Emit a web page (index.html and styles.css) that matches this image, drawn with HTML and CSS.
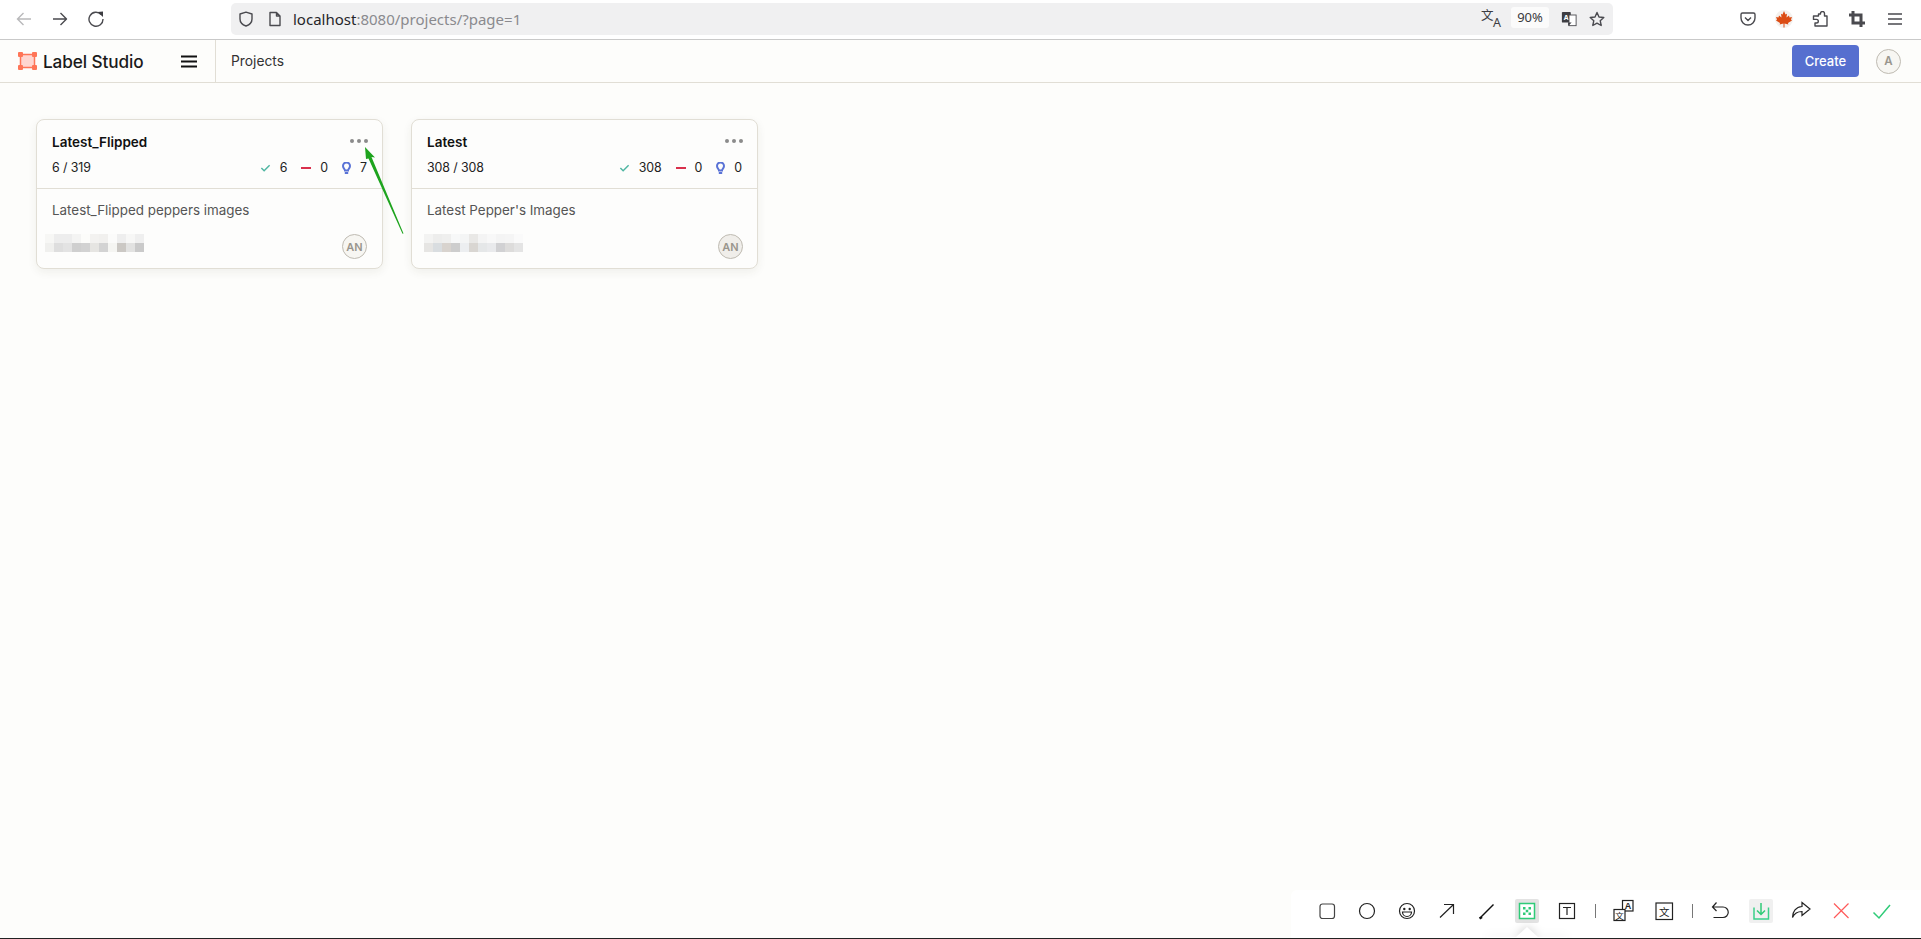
FILE: index.html
```html
<!DOCTYPE html>
<html lang="en">
<head>
<meta charset="utf-8">
<title>Label Studio</title>
<link rel="stylesheet" href="styles.css">
</head>
<body>
<header class="browser">
  <nav class="nav">
    <svg class="nav-ico" viewBox="0 0 16 16"><path class="st-dim" d="M15 8H1.500M7.500 2 1.500 8l6 6"/></svg>
    <svg class="nav-ico" viewBox="0 0 16 16"><path class="st-dark" d="M1 8h13.500M8.500 2l6 6-6 6"/></svg>
    <svg class="nav-ico" viewBox="0 0 16 16"><path class="st-dark" d="M13.200 3.500A7 7 0 1 0 15 8"/><path class="fl-dark" d="M9.500 1l5.500-.5V6z"/></svg>
  </nav>
  <div class="urlbar">
    <svg class="url-ico" viewBox="0 0 16 16"><path class="st-dark" d="M8 1.200 14 3v5c0 3.500-3 6-6 7-3-1-6-3.500-6-7V3z"/></svg>
    <svg class="url-ico" viewBox="0 0 16 16"><path class="st-dark" d="M3 1.500h6.500L13 5v9.500H3zM9.500 1.500V5H13"/></svg>
    <span class="url"><span class="url-host">localhost</span>:8080/projects/?page=1</span>
    <span class="url-end">
      <span class="tr-ico"><span class="tr-zh">文</span><span class="tr-en">A</span></span>
      <span class="zoom-pill">90%</span>
      <svg class="url-ico" viewBox="0 0 18 18"><rect class="fl-dark" x="1" y="1" width="10" height="12" rx="1"/><text class="tr-a" x="3" y="10">A</text><rect class="st-thin" x="9" y="4.500" width="8" height="12"/><path class="fl-dark" d="M8 13v4l4-4z"/></svg>
      <svg class="url-ico" viewBox="0 0 16 16"><path class="st-dark" d="m8 1.500 2 4.500 4.800.500-3.600 3.200 1 4.800L8 12.100 3.800 14.500l1-4.800-3.600-3.200L6 6z"/></svg>
    </span>
  </div>
  <div class="tools">
    <svg class="tool-ico" viewBox="0 0 16 16"><path class="st-dark" d="M2.500 2h11A1.500 1.500 0 0 1 15 3.500V7a7 7 0 0 1-14 0V3.500A1.500 1.500 0 0 1 2.500 2zM5 6.500 8 9.500l3-3"/></svg>
    <svg class="tool-ico tool-maple" viewBox="0 0 18 18"><circle class="fl-pale" cx="9" cy="9" r="9"/><path class="fl-maple" d="M9 1 10.500 4.500 12 3.700 11.500 7.500 14 5.500l.500 2 2.500-.500-1 2.500 1 1-4 2.500.3 1.500L9.500 13.500V17.500h-1v-4L4.700 14.500l.3-1.500L1 10.500l1-1L1 7l2.500.5L4 5.500l2.500 2L6 3.700 7.500 4.500z"/></svg>
    <svg class="tool-ico" viewBox="0 0 16 16"><path class="st-dark" d="M6.500 3h2V2.500a2 2 0 0 1 4 0V5H15v10H3v-3h1.500a1.800 1.800 0 0 0 0-3.600H1.500V5h5z"/></svg>
    <svg class="tool-ico" viewBox="0 0 16 16"><path class="st-crop" d="M4 0v12h12M0 4h12v12"/></svg>
    <svg class="tool-ico tool-menu" viewBox="0 0 16 16"><path class="st-dark" d="M1 3h14M1 8h14M1 13h14"/></svg>
  </div>
</header>

<div class="appbar">
  <div class="brand">
    <svg class="logo" viewBox="0 0 19 18"><rect class="logo-fill" x="2" y="2" width="15" height="14"/><path class="logo-line" d="M2.500 2.500h14v13h-14z"/><rect class="logo-dot" x="0" y="0" width="5" height="5" rx="1"/><rect class="logo-dot" x="14" y="0" width="5" height="5" rx="1"/><rect class="logo-dot" x="0" y="13" width="5" height="5" rx="1"/><rect class="logo-dot" x="14" y="13" width="5" height="5" rx="1"/></svg>
    <span class="brand-name">Label Studio</span>
    <svg class="burger" viewBox="0 0 16 13"><path class="st-burger" d="M0 1.500h16M0 6.500h16M0 11.500h16"/></svg>
  </div>
  <div class="crumb">Projects</div>
  <button class="create">Create</button>
  <span class="avatar avatar-top">A</span>
</div>

<main class="main">
  <article class="card">
    <div class="card-head">
      <div class="title-row"><h2 class="title">Latest_Flipped</h2><span class="dots"><i></i><i></i><i></i></span></div>
      <div class="stat-row">
        <span>6 / 319</span>
        <span class="stats">
          <span class="stat"><svg class="ic-check" viewBox="0 0 12 10"><path d="M1.500 5l3 3 6-6"/></svg>6</span>
          <span class="stat"><svg class="ic-dash" viewBox="0 0 10 10"><path d="M0 5h10"/></svg>0</span>
          <span class="stat"><svg class="ic-bulb" viewBox="0 0 9 12"><path d="M3 8.500C3 7 1 6.500 1 4a3.500 3.500 0 0 1 7 0C8 6.500 6 7 6 8.500zM2.800 11h3.400"/></svg>7</span>
        </span>
      </div>
    </div>
    <div class="card-body">
      <p class="desc">Latest_Flipped peppers images</p>
      <div class="meta-row">
        <svg class="pix" viewBox="0 0 99 18"><rect x="0" y="0" width="9" height="9" fill="#f7f7f5"/><rect x="9" y="0" width="9" height="9" fill="#ededed"/><rect x="18" y="0" width="9" height="9" fill="#ededed"/><rect x="27" y="0" width="9" height="9" fill="#f4f4f3"/><rect x="36" y="0" width="9" height="9" fill="#fcfcfa"/><rect x="45" y="0" width="9" height="9" fill="#f3f2f0"/><rect x="54" y="0" width="9" height="9" fill="#f1f0ee"/><rect x="63" y="0" width="9" height="9" fill="#fbfbfa"/><rect x="72" y="0" width="9" height="9" fill="#eeeeee"/><rect x="81" y="0" width="9" height="9" fill="#f7f7f6"/><rect x="90" y="0" width="9" height="9" fill="#efefef"/><rect x="0" y="9" width="9" height="9" fill="#f0f0ee"/><rect x="9" y="9" width="9" height="9" fill="#dedede"/><rect x="18" y="9" width="9" height="9" fill="#e3e3e3"/><rect x="27" y="9" width="9" height="9" fill="#cfcfcf"/><rect x="36" y="9" width="9" height="9" fill="#d2d2d2"/><rect x="45" y="9" width="9" height="9" fill="#e6e5e2"/><rect x="54" y="9" width="9" height="9" fill="#d3d3d3"/><rect x="63" y="9" width="9" height="9" fill="#f5f5f2"/><rect x="72" y="9" width="9" height="9" fill="#cbc8c4"/><rect x="81" y="9" width="9" height="9" fill="#e2e2e1"/><rect x="90" y="9" width="9" height="9" fill="#cacaca"/></svg>
        <span class="avatar avatar-card">AN</span>
      </div>
    </div>
  </article>

  <article class="card">
    <div class="card-head">
      <div class="title-row"><h2 class="title">Latest</h2><span class="dots"><i></i><i></i><i></i></span></div>
      <div class="stat-row">
        <span>308 / 308</span>
        <span class="stats">
          <span class="stat"><svg class="ic-check" viewBox="0 0 12 10"><path d="M1.500 5l3 3 6-6"/></svg>308</span>
          <span class="stat"><svg class="ic-dash" viewBox="0 0 10 10"><path d="M0 5h10"/></svg>0</span>
          <span class="stat"><svg class="ic-bulb" viewBox="0 0 9 12"><path d="M3 8.500C3 7 1 6.500 1 4a3.500 3.500 0 0 1 7 0C8 6.500 6 7 6 8.500zM2.800 11h3.400"/></svg>0</span>
        </span>
      </div>
    </div>
    <div class="card-body">
      <p class="desc">Latest Pepper's Images</p>
      <div class="meta-row meta-alt">
        <svg class="pix" viewBox="0 0 99 18"><rect x="0" y="0" width="9" height="9" fill="#f3f3f2"/><rect x="9" y="0" width="9" height="9" fill="#ededec"/><rect x="18" y="0" width="9" height="9" fill="#efefee"/><rect x="27" y="0" width="9" height="9" fill="#f7f8f8"/><rect x="36" y="0" width="9" height="9" fill="#f4f5f5"/><rect x="45" y="0" width="9" height="9" fill="#e9e8e6"/><rect x="54" y="0" width="9" height="9" fill="#f4f4f4"/><rect x="63" y="0" width="9" height="9" fill="#f8f8f8"/><rect x="72" y="0" width="9" height="9" fill="#f4f4f4"/><rect x="81" y="0" width="9" height="9" fill="#f5f5f5"/><rect x="90" y="0" width="9" height="9" fill="#fafafa"/><rect x="0" y="9" width="9" height="9" fill="#e6e5e3"/><rect x="9" y="9" width="9" height="9" fill="#d9dde0"/><rect x="18" y="9" width="9" height="9" fill="#d8d3ce"/><rect x="27" y="9" width="9" height="9" fill="#cdcdcd"/><rect x="36" y="9" width="9" height="9" fill="#eceef0"/><rect x="45" y="9" width="9" height="9" fill="#d9d6d2"/><rect x="54" y="9" width="9" height="9" fill="#e5e7e8"/><rect x="63" y="9" width="9" height="9" fill="#e9eaec"/><rect x="72" y="9" width="9" height="9" fill="#d1d1d3"/><rect x="81" y="9" width="9" height="9" fill="#dddcdb"/><rect x="90" y="9" width="9" height="9" fill="#e4e4e4"/></svg>
        <span class="avatar avatar-card avatar-alt">AN</span>
      </div>
    </div>
  </article>
</main>
<div class="edge"></div>

<svg class="annot" viewBox="0 0 60 100"><path class="annot-arrow" d="M5 3 15 13.500 11.500 13 43.500 89.500 42.500 89.800 8.500 14.500 6 15z"/></svg>

<div class="shot-bar">
  <span class="sb"><svg viewBox="0 0 24 24"><rect class="sb-round" x="5" y="5" width="14.500" height="14.500" rx="2.500"/></svg></span>
  <span class="sb"><svg viewBox="0 0 24 24"><circle class="sb-line" cx="12" cy="12" r="7.500"/></svg></span>
  <span class="sb"><svg viewBox="0 0 24 24"><circle class="sb-line" cx="12" cy="12" r="7.500"/><circle class="sb-fill" cx="9.300" cy="10" r="1.200"/><circle class="sb-fill" cx="14.700" cy="10" r="1.200"/><path class="sb-line" d="M7.500 13h9a4.500 4.500 0 0 1-9 0z"/></svg></span>
  <span class="sb"><svg viewBox="0 0 24 24"><path class="sb-line" d="M5 18.500 18.500 5.500M9 5.500h9.500V15"/></svg></span>
  <span class="sb"><svg viewBox="0 0 24 24"><path class="sb-pen" d="M6 18 18.500 5.500"/><path class="sb-pen-tip" d="M4.500 19.500 7 18"/></svg></span>
  <span class="sb sb-on"><svg viewBox="0 0 24 24"><rect class="sb-green" x="4.500" y="4.500" width="15" height="15"/><rect class="sb-gfill" x="8" y="8" width="2.500" height="2.500"/><rect class="sb-gfill" x="13.500" y="8" width="2.500" height="2.500"/><rect class="sb-gfill" x="10.750" y="10.750" width="2.500" height="2.500"/><rect class="sb-gfill" x="8" y="13.500" width="2.500" height="2.500"/><rect class="sb-gfill" x="13.500" y="13.500" width="2.500" height="2.500"/></svg></span>
  <span class="sb"><svg viewBox="0 0 24 24"><rect class="sb-line" x="4.500" y="4.500" width="15" height="15"/><path class="sb-line" d="M8 8.500h8M12 8.500V16"/></svg></span>
  <span class="sb-sep"></span>
  <span class="sb"><svg viewBox="0 0 24 24"><rect class="sb-box" x="10.500" y="1.500" width="10.500" height="10.500"/><text class="sb-txt" x="12.800" y="10">A</text><rect class="sb-boxw" x="2" y="10.500" width="11" height="11"/><text class="sb-txt-zh" x="3.300" y="19.500">文</text></svg></span>
  <span class="sb"><svg viewBox="0 0 24 24"><rect class="sb-line" x="4" y="4" width="16.500" height="16.500"/><text class="sb-txt-zh2" x="7" y="17">文</text></svg></span>
  <span class="sb-sep"></span>
  <span class="sb"><svg viewBox="0 0 24 24"><path class="sb-line" d="M7.500 3.500 3.500 8l4 4M3.500 8H14a4.500 4.500 0 0 1 0 10.500H4.500"/></svg></span>
  <span class="sb sb-soft"><svg viewBox="0 0 24 24"><path class="sb-green2" d="M5 8.500V20h14.500V8.500"/><path class="sb-green3" d="M12 4v11M8 11.500l4 4 4-4"/></svg></span>
  <span class="sb"><svg viewBox="0 0 24 24"><path class="sb-line" d="M13 3.500 21 10l-8 6.500V12.500c-4 0-7.500 1.500-9.500 6 0-6 3.500-10.500 9.500-11z"/></svg></span>
  <span class="sb"><svg viewBox="0 0 24 24"><path class="sb-x" d="M5 4.500 19.500 19M19.500 4.500 5 19"/></svg></span>
  <span class="sb"><svg viewBox="0 0 24 24"><path class="sb-ok" d="M4.500 13.500 10 19 21 6"/></svg></span>
</div>
<div class="shot-tip"></div>
</body>
</html>
```
FILE: styles.css
```css
* { box-sizing: border-box; }
html, body { margin: 0; height: 100%; }
body {
  width: 1921px; height: 939px; overflow: hidden; position: relative;
  display: flex; flex-direction: column;
  background: #fdfdfb; color: #1f1f1f;
  font-family: "Inter", "Liberation Sans", sans-serif;
}
svg { display: block; fill: none; }

/* browser chrome */
.browser {
  height: 40px; background: #fff; border-bottom: 1px solid #c9c9c9;
  display: flex; align-items: flex-start; padding-top: 3px;
}
.nav { width: 231px; padding: 8px 0 0 16px; display: flex; gap: 20px; }
.nav-ico { width: 16px; height: 16px; }
.st-dim { stroke: #b9b9bb; stroke-width: 1.4; }
.st-dark { stroke: #4a4a4f; stroke-width: 1.4; stroke-linejoin: round; }
.st-thin { stroke: #4a4a4f; stroke-width: 1; fill: #fff; }
.st-crop { stroke: #4a4a4f; stroke-width: 3; }
.fl-dark { fill: #3d3d42; }
.fl-pale { fill: #f4f1ee; }
.fl-maple { fill: #dc4c14; }
.urlbar {
  width: 1382px; height: 32px; background: #f0f0f1; border-radius: 5px;
  display: flex; align-items: center; padding-left: 7px; gap: 13px;
  font-family: "Noto Sans", sans-serif;
}
.url-ico { width: 16px; height: 16px; flex: none; }
.tr-ico { display: grid; width: 20px; height: 20px; flex: none; margin: 0 -2px; color: #3d3d42; }
.tr-zh { grid-area: 1 / 1; justify-self: start; align-self: start; font: 12.500px/12px "Noto Sans CJK SC", sans-serif; }
.tr-en { grid-area: 1 / 1; justify-self: end; align-self: end; font: 12.500px/12px "Noto Sans", sans-serif; }
.url { font-size: 15px; color: #8a8a8e; margin-left: -3px; }
.url-host { color: #26262a; }
.url-end { margin-left: auto; display: flex; align-items: center; gap: 12px; padding-right: 8px; }
.zoom-pill {
  width: 38px; height: 21px; margin-top: -3px; border-radius: 3px; background: #fbfbfb;
  font-size: 13px; color: #3a3a3e; text-align: center; line-height: 21px;
}
.tr-a { font: bold 8px "Noto Sans", sans-serif; fill: #fff; }
.sb-txt { font: bold 9px "Liberation Sans", sans-serif; fill: #222; }
.sb-txt-zh { font: 8.500px "Noto Sans CJK SC", sans-serif; fill: #222; }
.sb-txt-zh2 { font: 10.500px "Noto Sans CJK SC", sans-serif; fill: #222; }
.tools { flex: 1; display: flex; padding: 8px 17px 0 127px; gap: 21px; }
.tool-ico { width: 16px; height: 16px; flex: none; }
.tool-maple { width: 18px; height: 18px; margin: -1px -2px 0 -2px; }
.tool-menu { margin-left: 1px; }

/* app header */
.appbar {
  height: 43px; border-bottom: 1px solid #e1ded5; display: flex; align-items: center;
  padding-right: 20px;
}
.brand {
  width: 216px; height: 100%; border-right: 1px solid #e1ded5;
  display: flex; align-items: center; padding-left: 18px;
}
.logo { width: 19px; height: 18px; flex: none; }
.logo-fill { fill: #ffd6d0; }
.logo-line { stroke: #ff7557; stroke-width: 1.500; }
.logo-dot { fill: #ff7557; }
.brand-name { font-size: 17.200px; font-weight: 500; margin-left: 6px; color: #1a1a1a; white-space: nowrap; width: 101px; letter-spacing: -0.1px; }
.burger { width: 16px; height: 13px; margin-left: 37px; }
.st-burger { stroke: #111; stroke-width: 2.200; }
.crumb { margin-left: 15px; font-size: 13.800px; color: #333; flex: 1; }
.create {
  width: 67px; height: 32px; border: 0; border-radius: 4px; background: #566fcf;
  color: #fff; font: 500 13px "Inter", sans-serif; padding: 0;
}
.avatar {
  border-radius: 50%; display: flex; align-items: center; justify-content: center; flex: none;
  width: 25px; height: 25px; border: 1.300px solid #bfbbb2; color: #99958d; background: #f7f6f2;
  font-weight: 600;
}
.avatar-top { font-size: 11.500px; margin-left: 17px; }
.avatar-card { font-size: 11px; }
.avatar-alt { background: #f0eeea; }

/* cards */
.main { flex: 1; display: flex; align-items: flex-start; gap: 28px; padding: 36px 0 0 36px; }
.card {
  width: 347px; height: 150px; background: #fdfdfc; border: 1px solid #e1ded5; border-radius: 8px;
  box-shadow: 0 3px 10px rgba(60, 50, 30, .07);
}
.card-head { height: 69px; border-bottom: 1px solid #e1ded5; padding: 13px 15px 0 15px; }
.title-row { display: flex; justify-content: space-between; align-items: center; height: 17px; }
.title { margin: 0; font-size: 13.500px; font-weight: 600; color: #111; }
.dots { display: flex; gap: 3px; margin-right: -1px; margin-top: -1px; }
.dots i { width: 4px; height: 4px; border-radius: 50%; background: #8b8b8b; }
.stat-row {
  display: flex; justify-content: space-between; margin-top: 10px;
  font-size: 12.400px; line-height: 16px; color: #222; letter-spacing: -0.1px;
}
.stats { display: flex; gap: 14px; }
.stat { display: flex; align-items: center; gap: 9px; }
.ic-check { width: 11px; height: 10px; }
.ic-check path { stroke: #4fb6a2; stroke-width: 1.600; }
.ic-dash { width: 10px; height: 10px; }
.ic-dash path { stroke: #d9304c; stroke-width: 2; }
.ic-bulb { width: 9px; height: 12px; }
.ic-bulb path { stroke: #5a73d6; stroke-width: 2; }
.card-body { padding: 13px 15px 0 15px; }
.desc { margin: 0; font-size: 13.400px; line-height: 17px; color: #555; }
.meta-row { display: flex; justify-content: space-between; align-items: flex-start; margin-top: 15px; margin-left: -7px; }
.meta-alt { margin-left: -3px; margin-right: -1px; }
.pix { width: 99px; height: 18px; filter: blur(.5px); }

/* bottom strip of the screenshot */
.edge { height: 1px; background: #222; flex: none; }

/* annotation overlay */
.annot { position: absolute; left: 360px; top: 144px; width: 60px; height: 100px; }
.annot-arrow { fill: #1ea41e; }

/* screenshot tool bar */
.shot-bar {
  position: absolute; right: 0; bottom: 1px; height: 48px; width: 630px;
  display: flex; align-items: center; padding: 0 20px 6px 16px; background: #fff;
  border-radius: 6px 0 0 0;
}
.sb { width: 40px; height: 24px; display: flex; justify-content: center; flex: none; }
.sb svg { width: 24px; height: 24px; }
.sb-on svg { background: #e3e3e3; border-radius: 2px; }
.sb-soft svg { background: #f0f0f0; border-radius: 2px; }
.sb-sep { width: 17px; height: 14px; flex: none; position: relative; }
.sb-sep::before { content: ""; position: absolute; left: 8px; top: 0; width: 1px; height: 14px; background: #777; }
.sb-line { stroke: #222; stroke-width: 1.200; fill: none; }
.sb-round { stroke: #444; stroke-width: 1.200; }
.sb-fill { fill: #222; }
.sb-pen { stroke: #111; stroke-width: 1.500; }
.sb-pen-tip { stroke: #111; stroke-width: 2.500; }
.sb-box { stroke: #222; stroke-width: 1.200; fill: #fff; }
.sb-boxw { stroke: #222; stroke-width: 1.200; fill: #fff; }
.sb-green { stroke: #2fcb78; stroke-width: 1.500; fill: #fff; }
.sb-gfill { fill: #2fcb78; }
.sb-green2 { stroke: #3ad08a; stroke-width: 1.500; }
.sb-green3 { stroke: #2fcb78; stroke-width: 1.500; }
.sb-x { stroke: #ff5a5a; stroke-width: 1.200; }
.sb-ok { stroke: #2fcb78; stroke-width: 1.500; }
.shot-tip {
  position: absolute; left: 1487px; bottom: 1px; width: 80px; height: 1px; background: #fff;
  filter: drop-shadow(0 0 5px rgba(0, 0, 0, .22));
}
.shot-tip::before {
  content: ""; position: absolute; left: 28px; bottom: 0;
  border: 12px solid transparent; border-top: 0; border-bottom: 11px solid #fff;
}
```
